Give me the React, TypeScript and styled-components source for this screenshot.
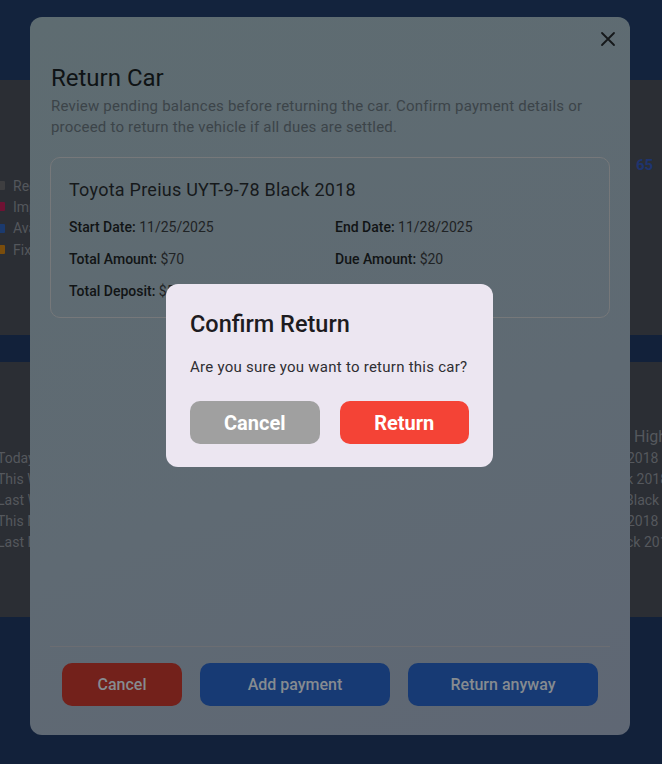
import React from 'react';
import styled, { createGlobalStyle } from 'styled-components';

const GlobalStyle = createGlobalStyle`
  html, body {
    margin: 0;
    padding: 0;
    background: #12213a;
    font-family: Roboto, "Liberation Sans", Arial, sans-serif;
    overflow: hidden;
  }
  * { box-sizing: border-box; }
`;

// Dashboard behind the dialogs (already dimmed by the backdrop)
const Page = styled.div`
  width: 662px;
  height: 764px;
  overflow: hidden;
  display: flex;
  flex-direction: column;
  background: #12213a;
`;

const TopBar = styled.div`
  height: 80px;
  background: #13233d;
`;

const Band = styled.div<{ h: number }>`
  height: ${(p) => p.h}px;
  background: #12213a;
`;

const Section = styled.div<{ h: number; pad: number }>`
  height: ${(p) => p.h}px;
  padding-top: ${(p) => p.pad}px;
  background: #2b2e34;
  display: flex;
  justify-content: space-between;
  align-items: flex-start;
`;

const Legend = styled.ul`
  list-style: none;
  margin: 95px 0 0 -2px;
  padding: 0;
`;

const LegendItem = styled.li<{ swatch: string }>`
  display: flex;
  align-items: center;
  gap: 8px;
  height: 21.3px;
  font-size: 14px;
  color: #54575c;
  white-space: nowrap;

  &::before {
    content: '';
    width: 7px;
    height: 9px;
    border-radius: 1px;
    background: ${(p) => p.swatch};
  }
`;

const Stat = styled.div`
  width: 32px;
  padding: 75px 0 0 6px;
  font-size: 15px;
  line-height: 20px;
  font-weight: 700;
  color: #1e3470;
`;

const PeriodList = styled.ul`
  list-style: none;
  margin: 24px 0 0 -3px;
  padding: 0;
`;

const Row = styled.li`
  height: 21px;
  line-height: 21px;
  font-size: 14px;
  color: #55585d;
  white-space: nowrap;
`;

const Ranking = styled.div`
  width: 32px;
  margin-top: 2px;
  white-space: nowrap;
`;

const RankingTitle = styled.div`
  padding-left: 4px;
  height: 22px;
  line-height: 22px;
  font-size: 16px;
  color: #55585d;
`;

const RankList = styled.ul`
  margin: 0;
  padding: 0;
`;

const RankItem = styled(Row)<{ shift: number }>`
  list-style: none;
  margin-left: ${(p) => p.shift}px;
`;

// Return car modal
const Backdrop = styled.div`
  position: fixed;
  inset: 0;
`;

const Modal = styled.div`
  position: absolute;
  left: 30px;
  top: 17px;
  width: 600px;
  height: 718px;
  border-radius: 12px;
  background: linear-gradient(160deg, #5e6c71 0%, #5f6a73 60%, #5f6774 100%);
  padding: 45px 20px 29px;
  display: flex;
  flex-direction: column;
`;

const CloseButton = styled.button`
  position: absolute;
  top: 9px;
  right: 9px;
  width: 26px;
  height: 26px;
  border: 0;
  padding: 0;
  background: transparent;
  display: flex;
  align-items: center;
  justify-content: center;
`;

const Title = styled.h2`
  margin: 0 0 0 1px;
  font-size: 24px;
  line-height: 32px;
  font-weight: 400;
  color: #0f1315;
`;

const Subtitle = styled.p`
  margin: 2px 0 0 1px;
  font-size: 15px;
  line-height: 21px;
  letter-spacing: 0.2px;
  color: #3c4449;
`;

const CarCard = styled.div`
  margin-top: 19px;
  border: 1px solid #76787a;
  border-radius: 10px;
  padding: 20px 18px 16px;
`;

const CarTitle = styled.h3`
  margin: 0;
  font-size: 18px;
  line-height: 24px;
  letter-spacing: 0.25px;
  font-weight: 400;
  color: #16191b;
`;

const Details = styled.div`
  margin-top: 15px;
  display: grid;
  grid-template-columns: 1fr 1fr;
  column-gap: 10px;
  row-gap: 12px;
`;

const Detail = styled.div`
  font-size: 14px;
  line-height: 20px;
  color: #1f2325;

  b {
    font-weight: 500;
    color: #111415;
  }
`;

const Spacer = styled.div`
  flex: 1;
`;

const Footer = styled.div`
  border-top: 1px solid #6b6d72;
  padding: 16px 12px 0;
  display: flex;
  gap: 18px;
`;

const FooterButton = styled.button<{ tone: 'danger' | 'primary'; w: number }>`
  width: ${(p) => p.w}px;
  height: 43px;
  border: 0;
  border-radius: 10px;
  background: ${(p) => (p.tone === 'danger' ? '#73211b' : '#173a74')};
  color: #868b90;
  font-family: inherit;
  font-size: 16px;
  font-weight: 500;
`;

// Confirm dialog
const Confirm = styled.div`
  position: absolute;
  left: 166px;
  top: 284px;
  width: 327px;
  padding: 26px 24px 23px;
  border-radius: 12px;
  background: #ece6f1;
`;

const ConfirmTitle = styled.h3`
  margin: 0;
  font-size: 23.5px;
  line-height: 28px;
  font-weight: 500;
  color: #1d1b20;
`;

const ConfirmText = styled.p`
  margin: 19px 0 0;
  font-size: 15px;
  line-height: 20px;
  letter-spacing: 0.25px;
  color: #2f2e33;
`;

const ConfirmActions = styled.div`
  margin-top: 24px;
  display: flex;
  gap: 20px;
`;

const ConfirmButton = styled.button<{ tone: 'muted' | 'danger' }>`
  width: 130px;
  height: 43px;
  border: 0;
  border-radius: 10px;
  background: ${(p) => (p.tone === 'danger' ? '#f44336' : '#a0a0a0')};
  color: #ffffff;
  font-family: inherit;
  font-size: 20px;
  font-weight: 700;
`;

const legend = [
  { label: 'Recent', swatch: '#3e3e40' },
  { label: 'Impounded', swatch: '#6e1233' },
  { label: 'Available', swatch: '#1b3a6e' },
  { label: 'Fixing', swatch: '#7a4d0c' },
];

const periods = ['Today', 'This Week', 'Last Week', 'This Month', 'Last Month'];

const ranking = [
  { text: '2018', shift: -3 },
  { text: 'k 2018', shift: -4 },
  { text: 'Black 2018', shift: -5 },
  { text: '2018', shift: -3 },
  { text: 'ck 2018', shift: -4 },
];

const details = [
  ['Start Date:', '11/25/2025'],
  ['End Date:', '11/28/2025'],
  ['Total Amount:', '$70'],
  ['Due Amount:', '$20'],
  ['Total Deposit:', '$50'],
];

export default function App() {
  return (
    <>
      <GlobalStyle />
      <Page>
        <TopBar />
        <Section h={255} pad={0}>
          <Legend>
            {legend.map((l) => (
              <LegendItem key={l.label} swatch={l.swatch}>
                {l.label}
              </LegendItem>
            ))}
          </Legend>
          <Stat>65</Stat>
        </Section>
        <Band h={27} />
        <Section h={255} pad={62}>
          <PeriodList>
            {periods.map((p) => (
              <Row key={p}>{p}</Row>
            ))}
          </PeriodList>
          <Ranking>
            <RankingTitle>Highest Earning</RankingTitle>
            <RankList>
              {ranking.map((r, i) => (
                <RankItem key={i} shift={r.shift}>
                  {r.text}
                </RankItem>
              ))}
            </RankList>
          </Ranking>
        </Section>
        <Band h={147} />
      </Page>

      <Backdrop>
        <Modal>
          <CloseButton aria-label="Close">
            <svg width="16" height="16" viewBox="0 0 16 16">
              <path d="M2 2 L14 14 M14 2 L2 14" stroke="#15181a" strokeWidth="1.8" strokeLinecap="round" />
            </svg>
          </CloseButton>
          <Title>Return Car</Title>
          <Subtitle>
            Review pending balances before returning the car. Confirm payment details or proceed to return
            the vehicle if all dues are settled.
          </Subtitle>
          <CarCard>
            <CarTitle>Toyota Preius UYT-9-78 Black 2018</CarTitle>
            <Details>
              {details.map(([k, v]) => (
                <Detail key={k}>
                  <b>{k}</b> {v}
                </Detail>
              ))}
            </Details>
          </CarCard>
          <Spacer />
          <Footer>
            <FooterButton tone="danger" w={120}>Cancel</FooterButton>
            <FooterButton tone="primary" w={190}>Add payment</FooterButton>
            <FooterButton tone="primary" w={190}>Return anyway</FooterButton>
          </Footer>
        </Modal>

        <Confirm role="dialog">
          <ConfirmTitle>Confirm Return</ConfirmTitle>
          <ConfirmText>Are you sure you want to return this car?</ConfirmText>
          <ConfirmActions>
            <ConfirmButton tone="muted">Cancel</ConfirmButton>
            <ConfirmButton tone="danger">Return</ConfirmButton>
          </ConfirmActions>
        </Confirm>
      </Backdrop>
    </>
  );
}
